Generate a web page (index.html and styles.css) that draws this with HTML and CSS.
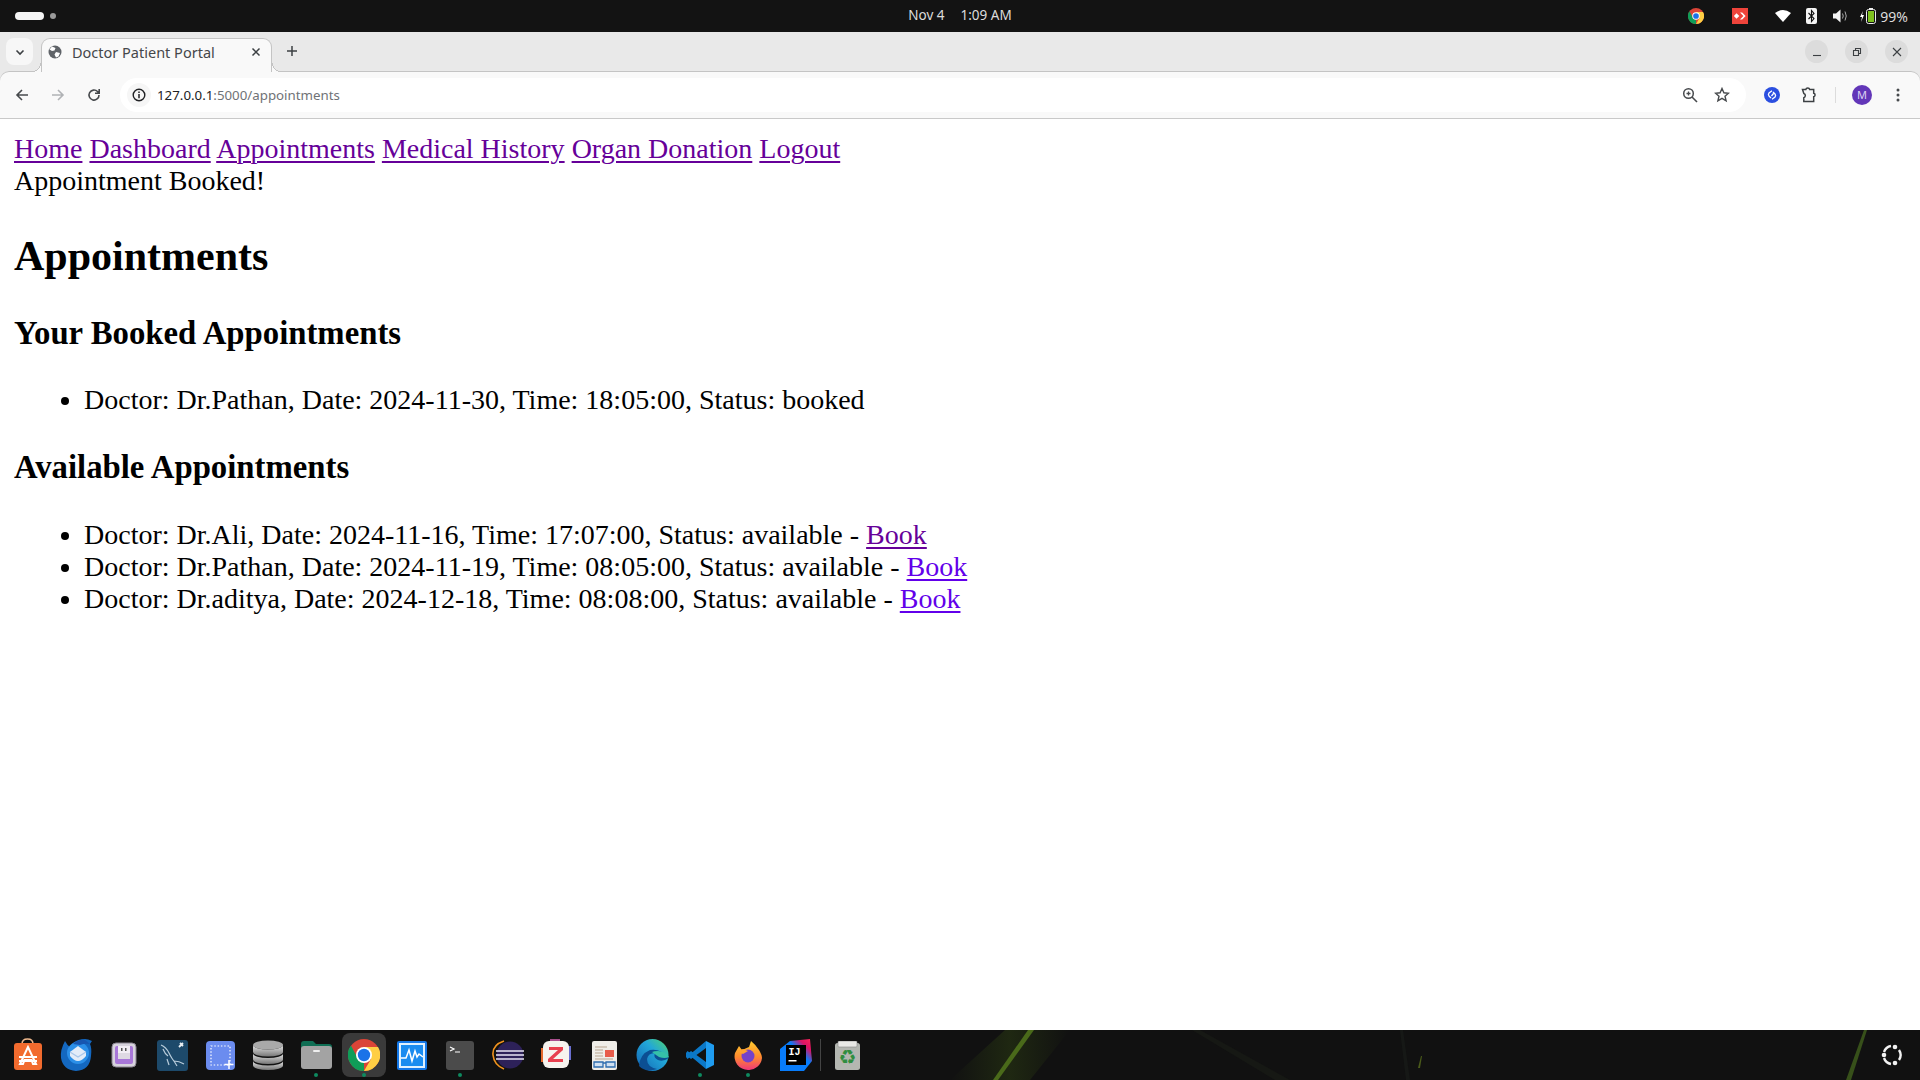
FILE: index.html
```html
<!DOCTYPE html>
<html lang="en">
<head>
<meta charset="utf-8">
<title>Doctor Patient Portal</title>
<link rel="stylesheet" href="styles.css">
</head>
<body>
<div class="screen">
  <header class="topbar">
    <div class="workspaces"><span class="ws-pill"></span><span class="ws-dot"></span></div>
    <div class="clock"><span>Nov 4</span><span>1:09 AM</span></div>
    <div class="tray">
      <svg class="tray-chrome" width="16" height="16" viewBox="0 0 32 32"><circle cx="16" cy="16" r="16" fill="#db4437"/><path d="M16 8H30A16 16 0 0 1 16 32L23 20Z" fill="#ffce44"/><path d="M3 6.500 10 20 16 24 16 32A16 16 0 0 1 3 6.500Z" fill="#0f9d58"/><circle cx="16" cy="16" r="7.500" fill="#fff"/><circle cx="16" cy="16" r="5.700" fill="#1a73e8"/></svg>
      <svg class="tray-any" width="16" height="16" viewBox="0 0 16 16"><rect width="16" height="16" fill="#ef443b"/><path d="M4.500 5.200 7.300 8 4.500 10.800 1.900 8ZM8 4.500h2.200L13.600 8l-3.400 3.500H8L11.400 8Z" fill="#fff"/></svg>
      <svg class="tray-wifi" width="16" height="12" viewBox="0 0 16 12"><path d="M8 12 0 3Q8-3 16 3Z" fill="#fff"/></svg>
      <svg class="tray-bt" width="11" height="16" viewBox="0 0 11 16"><rect width="11" height="16" rx="2" fill="#f4f4f4"/><path d="M2.500 5 8 10.500 5.500 13.500V2.500L8 5.500 2.500 11" fill="none" stroke="#111" stroke-width="1.100"/></svg>
      <svg class="tray-vol" width="15" height="14" viewBox="0 0 15 14"><path d="M0 4.500h3L7.500 0.500V13.500L3 9.500H0Z" fill="#f4f4f4"/><path d="M9.500 4.500Q11 7 9.500 9.500M12 2.500Q14.500 7 12 11.500" fill="none" stroke="#aaa" stroke-width="1"/></svg>
      <span class="battery">
        <svg width="20" height="16" viewBox="0 0 20 16"><path d="M4 3 1 9h2l-1 5 3-7H3Z" fill="#fff"/><rect x="7.500" y="1.500" width="9" height="14" rx="2" fill="none" stroke="#eee"/><rect x="10" y="0" width="4" height="2" fill="#eee"/><rect x="9" y="3" width="6" height="11" fill="#7ec11e"/></svg>
        <span>99%</span>
      </span>
    </div>
  </header>

  <div class="tabstrip">
    <span class="tab-search"><svg width="12" height="12" viewBox="0 0 12 12"><path d="M2.500 4.500 6 8l3.500-3.500" fill="none" stroke="#3c4043" stroke-width="1.600"/></svg></span>
    <div class="tab">
      <svg width="16" height="16" viewBox="0 0 16 16"><circle cx="8" cy="8" r="6.500" fill="#5f6368"/><path d="M5 2.500 8.500 4 7.500 6.500 5 7 2.500 5.500ZM9 8l4 1-1.500 3.500L9 13.500 7.500 10.500Z" fill="#fff"/></svg>
      <span class="tab-title">Doctor Patient Portal</span>
      <svg class="tab-close" width="10" height="10" viewBox="0 0 10 10"><path d="M1.500 1.500l7 7M8.500 1.500l-7 7" stroke="#3c4043" stroke-width="1.500"/></svg>
    </div>
    <svg class="tab-new" width="12" height="12" viewBox="0 0 12 12"><path d="M6 1v10M1 6h10" stroke="#3c4043" stroke-width="1.500"/></svg>
    <div class="window-buttons">
      <span class="win-btn"><svg width="10" height="10" viewBox="0 0 10 10"><path d="M1 8.500h8" stroke="#3c4043" stroke-width="1.100"/></svg></span>
      <span class="win-btn"><svg width="10" height="10" viewBox="0 0 10 10"><path d="M1.500 3.500h5v5h-5ZM3.500 3.500v-2h5v5h-2" fill="none" stroke="#3c4043" stroke-width="1.100"/></svg></span>
      <span class="win-btn"><svg width="10" height="10" viewBox="0 0 10 10"><path d="M1 1l8 8M9 1l-8 8" stroke="#3c4043" stroke-width="1.100"/></svg></span>
    </div>
  </div>

  <div class="toolbar">
    <svg class="nav-icon" width="16" height="16" viewBox="0 0 16 16"><path d="M14 8H3M8 3 3 8l5 5" fill="none" stroke="#474a4d" stroke-width="1.600"/></svg>
    <svg class="nav-icon" width="16" height="16" viewBox="0 0 16 16"><path d="M2 8h11M8 3l5 5-5 5" fill="none" stroke="#b0b2b5" stroke-width="1.600"/></svg>
    <svg class="nav-icon" width="16" height="16" viewBox="0 0 16 16"><path d="M13 8a5 5 0 1 1-1.500-3.500L13 6M13.200 2v4.200H9" fill="none" stroke="#474a4d" stroke-width="1.600"/></svg>
    <div class="omnibox">
      <span class="info"><svg width="14" height="14" viewBox="0 0 14 14"><circle cx="7" cy="7" r="5.800" fill="none" stroke="#202124" stroke-width="1.400"/><path d="M7 6v4.200M7 3.600v1.300" stroke="#202124" stroke-width="1.500"/></svg></span>
      <span class="url"><b>127.0.0.1</b>:5000/appointments</span>
      <svg class="omni-zoom" width="16" height="16" viewBox="0 0 16 16"><circle cx="6.500" cy="6.500" r="4.800" fill="none" stroke="#474a4d" stroke-width="1.500"/><path d="M10 10l5 5" stroke="#474a4d" stroke-width="1.600"/><path d="M4.500 6.500h4M6.500 4.500v4" stroke="#474a4d" stroke-width="1.300"/></svg>
      <svg class="omni-star" width="16" height="16" viewBox="0 0 16 16"><path d="M8 1.500l1.900 4.300 4.600.4-3.500 3 1.100 4.600L8 11.400l-4.100 2.400L5 9.200l-3.500-3 4.600-.4Z" fill="none" stroke="#474a4d" stroke-width="1.400"/></svg>
    </div>
    <svg class="shazam" width="16" height="16" viewBox="0 0 16 16"><circle cx="8" cy="8" r="8" fill="#2b4fe0"/><path d="M7 11 5 9Q3.800 7.500 5 6L8 3.800M9 5l2 2q1.200 1.500 0 3L8 12.200M9.500 6.500 7.500 9" fill="none" stroke="#fff" stroke-width="1.300"/></svg>
    <svg class="puzzle" width="17" height="17" viewBox="0 0 17 17"><path d="M1.500 3.500h3.300a2 2 0 0 1 3.900 0h4v3.700a1.800 1.800 0 0 1 0 3.500v4.800H2.800v-3.800a2.200 2.200 0 0 0 0-4.200Z" fill="none" stroke="#3c4043" stroke-width="1.500"/></svg>
    <span class="tool-sep"></span>
    <span class="avatar">M</span>
    <svg class="kebab" width="4" height="14" viewBox="0 0 4 14"><circle cx="2" cy="2" r="1.500" fill="#474a4d"/><circle cx="2" cy="7" r="1.500" fill="#474a4d"/><circle cx="2" cy="12" r="1.500" fill="#474a4d"/></svg>
  </div>

  <main class="page">
    <nav>
      <a class="visited" href="#home">Home</a>
      <a class="visited" href="#dashboard">Dashboard</a>
      <a class="visited" href="#appointments">Appointments</a>
      <a class="visited" href="#history">Medical History</a>
      <a class="visited" href="#organ">Organ Donation</a>
      <a class="visited" href="#logout">Logout</a>
    </nav>
    <div>Appointment Booked!</div>
    <h1>Appointments</h1>
    <h2>Your Booked Appointments</h2>
    <ul>
      <li>Doctor: Dr.Pathan, Date: 2024-11-30, Time: 18:05:00, Status: booked</li>
    </ul>
    <h2>Available Appointments</h2>
    <ul>
      <li>Doctor: Dr.Ali, Date: 2024-11-16, Time: 17:07:00, Status: available - <a class="visited" href="#b1">Book</a></li>
      <li>Doctor: Dr.Pathan, Date: 2024-11-19, Time: 08:05:00, Status: available - <a class="fresh" href="#b2">Book</a></li>
      <li>Doctor: Dr.aditya, Date: 2024-12-18, Time: 08:08:00, Status: available - <a class="fresh" href="#b3">Book</a></li>
    </ul>
  </main>

  <footer class="dock">
    <svg class="wallpaper" width="1920" height="50" viewBox="0 0 1920 50"><defs><linearGradient id="glow" x1="0" x2="1"><stop offset="0" stop-color="#2a3a12" stop-opacity="0"/><stop offset=".5" stop-color="#2a3a12" stop-opacity=".55"/><stop offset="1" stop-color="#2a3a12" stop-opacity="0"/></linearGradient></defs><path d="M950 50 1005 0H1070L1030 50Z" fill="url(#glow)"/><path d="M993 50 1028 0H1034L998 50Z" fill="#4a6a1a"/><path d="M1192 0H1200L1290 50H1275Z" fill="#161814"/><path d="M1418 38 1421 26 1422 26 1420 38Z" fill="#4a5a1a"/><path d="M1400 0H1403L1410 50H1406Z" fill="#161816"/><path d="M1846 50 1864 0H1867L1851 50Z" fill="#37501a"/></svg>
    <div class="dock-items">
      <span class="dock-slot"><svg width="32" height="34" viewBox="0 0 32 34"><path d="M10 6Q10 1 15.500 1T21 6" fill="none" stroke="#eeb78c" stroke-width="1.500"/><rect x="2" y="5" width="28" height="27" rx="3" fill="#f26b2e"/><path d="M16 9 8 26h3l1.500-4h7l1.500 4h3ZM7 19h18M7 23h18" fill="none" stroke="#fff" stroke-width="2"/></svg></span>
      <span class="dock-slot"><svg width="34" height="34" viewBox="0 0 34 34"><path d="M6 3Q1 12 2 20 4 32 17 33 31 32 32 18 33 10 31 6L33 3Q29 1 26 1 19 1 14 5 12 7 11 9 8 7 6 3Z" fill="#1468c0"/><circle cx="19" cy="15" r="11" fill="#2b8fe8"/><path d="M14 6Q20 1 26 2L31 6Q26 5 21 7Z" fill="#1756b0"/><path d="M11 14 19 8 27 14V18Q23 23 19 23T11 18Z" fill="#e3ecf8"/><path d="M11 14l8 5 8-5" fill="none" stroke="#a9c7ea" stroke-width="1.300"/></svg></span>
      <span class="dock-slot"><svg width="26" height="26" viewBox="0 0 26 26"><rect x="1" y="1" width="24" height="24" rx="4" fill="#d7d3dd" stroke="#8a8590"/><rect x="4" y="4" width="18" height="18" rx="2" fill="#a877d8"/><rect x="7" y="4" width="12" height="12" fill="#f2eef5"/><rect x="10" y="6" width="1.500" height="3" fill="#555"/><rect x="14" y="6" width="1.500" height="3" fill="#555"/><rect x="7" y="11" width="12" height="6" fill="#ded9e3"/></svg></span>
      <span class="dock-slot"><svg width="31" height="31" viewBox="0 0 31 31"><rect width="31" height="31" rx="3" fill="#1d4a6b"/><path d="M4 5Q9 7 12 13T17 21L20 26M17 21Q22 21 27 24M6 9Q8 14 11 16M10 19 12 25" fill="none" stroke="#b9cddb" stroke-width="1.200"/><path d="M23 3l3 3M26 3 22 7" stroke="#e8eef2" stroke-width="1.800"/></svg></span>
      <span class="dock-slot"><svg width="29" height="29" viewBox="0 0 29 29"><rect width="29" height="29" rx="4" fill="#6b8cef"/><rect x="5" y="5" width="19" height="19" fill="none" stroke="#fff" stroke-width="1.200" stroke-dasharray="1.500 1.800"/><path d="M23 19v9M18.500 23.500h9" stroke="#fff" stroke-width="1.500"/></svg></span>
      <span class="dock-slot"><svg width="30" height="30" viewBox="0 0 30 30"><defs><linearGradient id="disk" x1="0" x2="0" y1="0" y2="1"><stop offset="0" stop-color="#e5e5e5"/><stop offset="1" stop-color="#777"/></linearGradient></defs><ellipse cx="15" cy="5" rx="15" ry="4.500" fill="#a9a9a9"/><path d="M0 5v7a15 4.500 0 0 0 30 0V5a15 4.500 0 0 1-30 0Z" fill="url(#disk)"/><path d="M0 13.500v6a15 4.500 0 0 0 30 0v-6a15 4.500 0 0 1-30 0Z" fill="url(#disk)"/><path d="M0 21v4.500a15 4.500 0 0 0 30 0V21a15 4.500 0 0 1-30 0Z" fill="url(#disk)"/></svg></span>
      <span class="dock-slot running"><svg width="31" height="28" viewBox="0 0 31 28"><path d="M0 3Q0 0 3 0H12L15 3H28Q31 3 31 6V10H0Z" fill="#0f6e54"/><rect y="5" width="31" height="23" rx="3" fill="#a3a3a3"/><rect x="12" y="9" width="7" height="2" rx="1" fill="#eee"/></svg></span>
      <span class="dock-slot running active"><svg width="32" height="32" viewBox="0 0 32 32"><circle cx="16" cy="16" r="16" fill="#db4437"/><path d="M16 8H30A16 16 0 0 1 16 32L23 20Z" fill="#ffce44"/><path d="M3 6.500 10 20 16 24 16 32A16 16 0 0 1 3 6.500Z" fill="#0f9d58"/><circle cx="16" cy="16" r="8" fill="#fff"/><circle cx="16" cy="16" r="6.200" fill="#1a73e8"/></svg></span>
      <span class="dock-slot"><svg width="30" height="29" viewBox="0 0 30 29"><rect width="30" height="29" rx="2" fill="#1478e8"/><rect x="2" y="2" width="26" height="25" fill="#dff1ff"/><rect x="4" y="4" width="22" height="21" fill="#1a8cf0"/><path d="M4 17H9L12 9 15 20 18 10 20 16 22 13 26 16" fill="none" stroke="#fff" stroke-width="1.500"/></svg></span>
      <span class="dock-slot running"><svg width="28" height="29" viewBox="0 0 28 29"><rect width="28" height="29" rx="3" fill="#4b4b4b"/><path d="M4 6l4 2-4 2M9 11h5" fill="none" stroke="#fff" stroke-width="1.200"/></svg></span>
      <span class="dock-slot"><svg width="32" height="30" viewBox="0 0 32 30"><path d="M12 1Q0 5 1 15T12 29" fill="none" stroke="#f0921e" stroke-width="1.600"/><circle cx="18" cy="15" r="13.500" fill="#2d2159"/><path d="M4 11h28M4 15h28M4 19h28" stroke="#e8e4f4" stroke-width="1.500"/></svg></span>
      <span class="dock-slot"><svg width="32" height="32" viewBox="0 0 32 32"><rect x="1" y="9" width="4" height="14" fill="#e56a2c"/><rect x="27" y="7" width="4" height="14" fill="#6a6fd0"/><rect x="10" y="0" width="10" height="4" fill="#a94f8e"/><rect x="3" y="2" width="26" height="27" rx="6" fill="#f6f3ee"/><path d="M9 8h14v3L13 20h10v3H8v-3l10-9H9Z" fill="#e8404f"/></svg></span>
      <span class="dock-slot"><svg width="25" height="29" viewBox="0 0 25 29"><rect width="25" height="29" rx="2" fill="#f0eee9"/><path d="M3 6h12M3 9h8M3 12h8M3 15h8M3 18h18" stroke="#b9a58f" stroke-width="1"/><rect x="13" y="9" width="9" height="7" fill="#e85d4b"/><path d="M2 21h9v5H2ZM14 21h9v5h-9ZM11 22h3" fill="#cfe0f2" stroke="#2e6db0" stroke-width="1.300"/></svg></span>
      <span class="dock-slot"><svg width="33" height="32" viewBox="0 0 33 32"><defs><linearGradient id="edge" x1="0" x2="1" y1="1" y2="0"><stop offset="0" stop-color="#1262b3"/><stop offset=".6" stop-color="#22a7d8"/><stop offset="1" stop-color="#52d66c"/></linearGradient></defs><circle cx="16.500" cy="16" r="16" fill="url(#edge)"/><path d="M33 19Q27 23 22 21 17 19 19 14 12 14 11 20 11 28 21 30 10 34 3 27 4 15 14 11 24 9 33 19Z" fill="#0c4f93"/><path d="M33 18Q30 12 22 12 18 12 16 13 20 16 23 18 29 20 33 18Z" fill="#35c1a8"/></svg></span>
      <span class="dock-slot running"><svg width="28" height="28" viewBox="0 0 28 28"><path d="M20 0 28 4V24L20 28Z" fill="#1f9cf0"/><path d="M20 0V7L5 18 1.500 15 0 16V12L1.500 10 5 12.500Z" fill="#0b78c8"/><path d="M20 28V21L5 10 1.500 13 0 12V16L1.500 18 5 15.500Z" fill="#0b78c8"/></svg></span>
      <span class="dock-slot running"><svg width="28" height="29" viewBox="0 0 28 29"><defs><linearGradient id="fox" x1="0" x2="0" y1="0" y2="1"><stop offset="0" stop-color="#ffcb2e"/><stop offset=".55" stop-color="#ff8a2e"/><stop offset="1" stop-color="#f0377a"/></linearGradient></defs><path d="M14 29A13.500 13.500 0 0 1 1 12L5 5 8 9 15 6 17 0Q22 4 25 9T28 17A13.500 13.500 0 0 1 14 29Z" fill="url(#fox)"/><circle cx="14" cy="15" r="6.500" fill="#7542c9"/><path d="M3 10 9 8 14 10 9 13Z" fill="#ffa32e"/></svg></span>
      <span class="dock-slot"><svg width="32" height="32" viewBox="0 0 32 32"><defs><linearGradient id="ij" x1="0" x2="1" y1="1" y2="0"><stop offset="0" stop-color="#087cfa"/><stop offset=".6" stop-color="#087cfa"/><stop offset=".8" stop-color="#dd1265"/><stop offset="1" stop-color="#fe2857"/></linearGradient></defs><path d="M0 10 10 2 30 0 32 22 24 32H0Z" fill="url(#ij)"/><rect x="6" y="6" width="20" height="20" fill="#000"/><text class="ij" x="8.500" y="15.500">IJ</text><rect x="8.500" y="21" width="8" height="1.500" fill="#fff"/></svg></span>
      <span class="dock-sep"></span>
      <span class="dock-slot trash"><svg width="25" height="29" viewBox="0 0 25 29"><rect y="2" width="25" height="27" rx="2.500" fill="#b4b7b1"/><rect x="3" y="0" width="19" height="6" rx="1" fill="#e9e9e6" stroke="#888" stroke-width=".6"/><text class="recycle" x="12.500" y="23" text-anchor="middle">♻</text></svg></span>
    </div>
    <svg class="ubuntu" width="22" height="24" viewBox="0 0 22 24"><path d="M10 3A9 9 0 0 0 3 9M3 15A9 9 0 0 0 10 21M18 7A9 9 0 0 1 18 17" fill="none" stroke="#f2f2f2" stroke-width="2.400"/><circle cx="14" cy="4" r="2.300" fill="#f2f2f2"/><circle cx="14" cy="20" r="2.300" fill="#f2f2f2"/><circle cx="3" cy="12" r="2.300" fill="#f2f2f2"/></svg>
  </footer>
</div>
</body>
</html>
```
FILE: styles.css
```css
* { box-sizing: border-box; }
html, body { margin: 0; height: 100%; }
body { overflow: hidden; background: #fff; }
svg { display: block; flex: none; }

.screen { display: flex; flex-direction: column; width: 1920px; height: 1080px; background: #e9e9e9; }

.topbar {
  flex: none; height: 32px; background: #131313; color: #e4e4e4;
  display: grid; grid-template-columns: 1fr auto 1fr; align-items: center;
  font: 13.500px "Noto Sans", sans-serif;
}
.workspaces { display: flex; align-items: center; gap: 6px; padding-left: 15px; }
.ws-pill { width: 29px; height: 8px; border-radius: 4px; background: #f5f5f5; }
.ws-dot { width: 6px; height: 6px; border-radius: 50%; background: #9a9a9a; }
.clock { display: flex; gap: 16px; color: #dcdcdc; padding-bottom: 2px; }
.tray { display: flex; align-items: center; justify-content: flex-end; padding-right: 12px; }
.tray-chrome { margin-right: 28px; }
.tray-any { margin-right: 27px; }
.tray-wifi { margin-right: 14.500px; }
.tray-bt { margin-right: 16px; }
.tray-vol { margin-right: 11.500px; }
.battery { display: flex; align-items: center; gap: 1px; color: #dcdcdc; font-size: 14px; }

.tabstrip {
  flex: none; height: 39px; background: #e9e9e9; position: relative; z-index: 1;
  display: flex; align-items: flex-start; padding: 6px 0 0 6px;
}
.tab-search {
  width: 27px; height: 27px; border-radius: 8px; background: #f7f7f7;
  display: flex; align-items: center; justify-content: center;
}
.tab {
  position: relative; width: 231px; height: 34px; margin-left: 8px; padding: 0 10px 8px 5px;
  background: #f9f9f9; border: 1px solid #c4c4c4; border-bottom: 0; border-radius: 9px 9px 0 0;
  display: flex; align-items: center; gap: 9px;
  font: 14.500px "Noto Sans", sans-serif; color: #45474a;
}
.tab::before, .tab::after {
  content: ""; position: absolute; bottom: 0; width: 9px; height: 9px;
}
.tab::before {
  left: -10px;
  background: radial-gradient(circle at 0 0, transparent 8px, #c4c4c4 8px, #c4c4c4 9px, #f9f9f9 9px);
}
.tab::after {
  right: -10px;
  background: radial-gradient(circle at 100% 0, transparent 8px, #c4c4c4 8px, #c4c4c4 9px, #f9f9f9 9px);
}
.tab-title { flex: 1; }
.tab-new { margin: 7px 0 0 14px; }
.window-buttons { margin-left: auto; display: flex; gap: 17px; padding-right: 12px; margin-top: 2px; }
.win-btn {
  width: 23px; height: 23px; border-radius: 50%; background: #dcdcdc;
  display: flex; align-items: center; justify-content: center;
}

.toolbar {
  flex: none; height: 48px; background: #f9f9f9; border-bottom: 1px solid #c9c9c9;
  border-radius: 9px 9px 0 0; box-shadow: inset 0 1px 0 #c4c4c4;
  display: flex; align-items: center; padding-left: 14px;
}
.nav-icon { margin-right: 20px; }
.nav-icon:nth-child(3) { margin-right: 18px; }
.omnibox {
  flex: none; width: 1626px; height: 34px; background: #fff; border-radius: 17px;
  display: flex; align-items: center; padding-left: 7px;
  font: 13.300px "Noto Sans", sans-serif; color: #6f7276;
}
.info { width: 24px; height: 24px; border-radius: 50%; background: #f6f6f6; display: flex; align-items: center; justify-content: center; margin-right: 6px; }
.url b { font-weight: 400; color: #202124; }
.omni-zoom { margin-left: auto; }
.omni-star { margin: 0 16px; }
.shazam { margin-left: 18px; }
.puzzle { margin-left: 20.500px; }
.tool-sep { width: 1px; height: 16px; background: #dcdcdc; margin-left: 17px; }
.avatar {
  width: 20px; height: 20px; margin-left: 16.500px; border-radius: 50%; background: #6236b8; color: #dcd0f2;
  display: flex; align-items: center; justify-content: center; font: 11px "Noto Sans", sans-serif;
}
.kebab { margin-left: 24px; }

.page {
  flex: 1; min-height: 0; padding: 14px; background: #fff; color: #000;
  font: 28px "Liberation Serif", "Times New Roman", serif;
}
.page a { text-decoration-thickness: 2px; text-underline-offset: 3px; }
.page a.visited { color: #660099; }
.page a.fresh { color: #6200ea; }
.page h1 { margin: 34.860px 0; font-size: 42px; font-weight: 700; }
.page h2 { margin: 32.760px 0; font-size: 32.760px; font-weight: 700; }
.page ul { margin: 28px 0; padding-left: 70px; }

.dock {
  flex: none; height: 50px; background: #111; position: relative;
  display: flex; align-items: center;
}
.wallpaper { position: absolute; inset: 0; }
.dock-items { position: relative; display: flex; align-items: center; padding-left: 4px; height: 100%; }
.dock-slot { position: relative; width: 48px; height: 44px; display: flex; align-items: center; justify-content: center; }
.dock-slot.active { width: 44px; margin: 0 2px; border-radius: 8px; background: #3a3a3a; }
.dock-slot.running::after {
  content: ""; position: absolute; left: 50%; bottom: 0; width: 4px; height: 4px; margin-left: -2px;
  border-radius: 50%; background: #0e8a5f;
}
.dock-sep { width: 1px; height: 32px; background: #444; }
.dock-slot.trash { width: 52px; }
.ubuntu { position: relative; margin-left: auto; margin-right: 17px; }
.ij { font: 700 10px "Liberation Mono", monospace; fill: #fff; }
.recycle { font: 20px "DejaVu Sans", sans-serif; fill: #2f8d3f; }
```
